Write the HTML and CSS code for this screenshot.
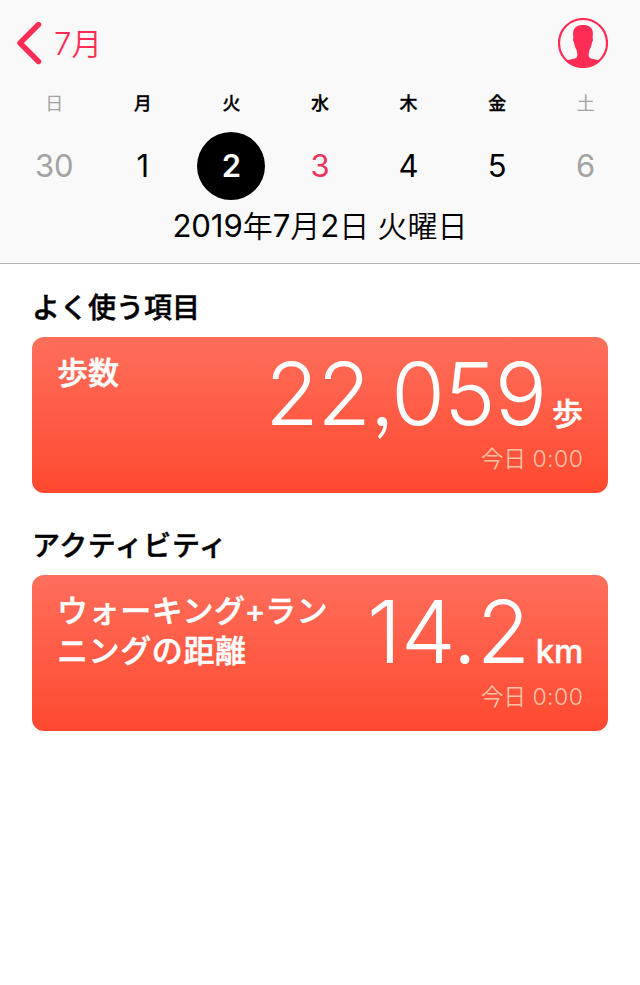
FILE: index.html
```html
<!DOCTYPE html>
<html lang="ja">
<head>
<meta charset="utf-8">
<title>ヘルスケア</title>
<link rel="stylesheet" href="styles.css">
</head>
<body>
<header class="header">
  <nav class="nav">
    <a class="back"><svg class="chevron" width="26" height="44" viewBox="0 0 26 44"><path d="M22.5 3.5 4 22 22.5 40.5" fill="none" stroke="#ff2d55" stroke-width="5.4" stroke-linecap="round" stroke-linejoin="round"/></svg><span class="back-label"><span class="num">7</span>月</span></a>
    <svg class="avatar" width="50" height="50" viewBox="0 0 50 50"><circle cx="25" cy="25" r="24" fill="none" stroke="#ff2d55" stroke-width="2.2"/><path d="M8 43C11 41.500 14 41.500 17 40.500C19 39.800 19.400 38.500 19.300 36L18.600 32C17 29 16.300 27 15.900 24C14.800 23 14.800 21 15.400 20C14.800 16 14.800 12.500 16.800 10C19 7.500 22.500 7 25 7S31 7.500 33.200 10C35.200 12.500 35.200 16 34.600 20C35.200 21 35.200 23 34.100 24C33.700 27 33 29 31.400 32L30.700 36C30.600 38.500 31 39.800 33 40.500C36 41.500 39 41.500 42 43C38 47 32 49.500 25 49.500S12 47 8 43Z" fill="#ff2d55"/></svg>
  </nav>
  <div class="week names">
    <span class="off">日</span><span>月</span><span>火</span><span>水</span><span>木</span><span>金</span><span class="off">土</span>
  </div>
  <div class="week days">
    <span class="off">30</span><span>1</span><span class="selected">2</span><span class="today">3</span><span>4</span><span>5</span><span class="off">6</span>
  </div>
  <div class="date"><span class="num">2019</span>年<span class="num">7</span>月<span class="num">2</span>日 火曜日</div>
</header>
<main class="content">
  <h2 class="heading">よく使う項目</h2>
  <section class="card">
    <div class="label">歩数</div>
    <div class="reading">
      <div class="value"><span class="big steps">22,059</span><span class="unit">歩</span></div>
      <div class="time">今日 <span class="clock">0:00</span></div>
    </div>
  </section>
  <h2 class="heading kana">アクティビティ</h2>
  <section class="card">
    <div class="label kana">ウォーキング<span class="plus">+</span>ラン<br>ニングの距離</div>
    <div class="reading">
      <div class="value"><span class="big distance">14.2</span><span class="unit latin">km</span></div>
      <div class="time">今日 <span class="clock">0:00</span></div>
    </div>
  </section>
</main>
</body>
</html>
```
FILE: styles.css
```css
* { box-sizing: border-box; }
body {
  margin: 0;
  height: 985px;
  background: #fff;
  color: #000;
  font-family: Inter, "Noto Sans CJK JP", sans-serif;
}
.header {
  height: 264px;
  background: #f9f9f9;
  border-bottom: 1px solid #b2b2b2;
}
.nav {
  display: flex;
  justify-content: space-between;
  align-items: center;
  height: 86px;
  padding: 0 32px 0 16px;
}
.back { display: flex; align-items: center; gap: 12px; color: #ff2d55; }
.back-label { padding-top: 1px; font-size: 30.5px; line-height: 44px; font-weight: 350; }
.num { font-size: 31.2px; font-weight: 400; }
.back .num { font-weight: 350; }
.week {
  display: grid;
  grid-template-columns: repeat(7, 1fr);
  padding: 0 10px;
  text-align: center;
}
.names { height: 34px; line-height: 36px; font-size: 18px; font-weight: 500; -webkit-text-stroke: .3px; }
.names .off { font-weight: 400; -webkit-text-stroke: 0; }
.off { color: #a3a3a3; }
.days { height: 92px; align-items: center; font-size: 31px; line-height: 68px; }
.selected {
  width: 68px;
  height: 68px;
  justify-self: center;
  border-radius: 50%;
  background: #000;
  color: #fff;
  font-weight: 600;
}
.today { color: #e8365d; }
.date { height: 51px; line-height: 28px; text-align: center; font-size: 30px; font-weight: 350; }
.date .num { letter-spacing: -.1px; }
.content { padding: 0 32px; }
.heading {
  display: flex;
  align-items: center;
  height: 73px;
  margin: 0;
  padding-top: 10px;
  font-size: 28px;
  font-weight: 500;
  -webkit-text-stroke: .45px;
}
.card {
  display: flex;
  justify-content: space-between;
  height: 156px;
  padding: 16px 25px 0;
  border-radius: 12px;
  background: linear-gradient(#ff6e5b, #ff4930);
  color: #fff;
}
.card + .heading { height: 82px; padding-top: 19px; }
.label { font-size: 31px; line-height: 40px; font-weight: 500; white-space: nowrap; -webkit-text-stroke: .45px; }
.kana { letter-spacing: .6px; }
.plus { margin: 0 -1px; }
.reading { text-align: right; white-space: nowrap; }
.value { display: flex; justify-content: flex-end; align-items: baseline; gap: 6px; height: 92px; line-height: 82px; }
.big { font-size: 87px; font-weight: 300; font-feature-settings: "ss03"; }
.steps { letter-spacing: -1px; }
.distance { letter-spacing: -.3px; }
.unit { font-size: 31px; font-weight: 500; -webkit-text-stroke: .45px; }
.latin { font-size: 33px; letter-spacing: -.3px; }
.time { font-size: 22.5px; line-height: 28px; font-weight: 350; color: #ffc1a6; }
.clock { font-size: 23px; letter-spacing: .5px; margin-right: -.5px; }
```
